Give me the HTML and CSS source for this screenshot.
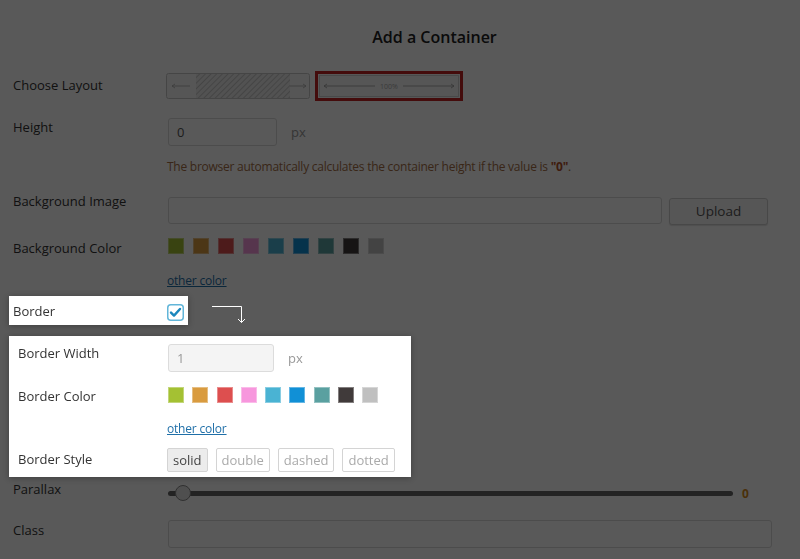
FILE: index.html
```html
<!DOCTYPE html>
<html>
<head>
<meta charset="utf-8">
<link rel="stylesheet" href="styles.css">
</head>
<body>
<div class="page">
  <h1 class="title">Add a Container</h1>

  <div class="row row-layout">
    <div class="label">Choose Layout</div>
    <div class="layouts">
      <svg class="layout-opt" width="144" height="26" viewBox="0 0 144 26">
        <defs>
          <pattern id="hatch" width="4" height="4" patternUnits="userSpaceOnUse" patternTransform="rotate(45)">
            <rect width="4" height="4" fill="#ebebeb"/>
            <line x1="0" y1="0" x2="0" y2="4" stroke="#bdbdbd" stroke-width="1.6"/>
          </pattern>
        </defs>
        <rect x="0.5" y="0.5" width="143" height="25" rx="2" fill="#f7f7f7" stroke="#c6c6c6"/>
        <rect x="30" y="1" width="94" height="24" fill="url(#hatch)"/>
        <path d="M6 13H24M6 13l3-2M6 13l3 2M124 13H140M140 13l-3-2M140 13l-3 2" stroke="#aaa" stroke-width="0.8" fill="none"/>
      </svg>
      <svg class="layout-opt sel" width="148" height="30" viewBox="0 0 148 30">
        <rect x="1.5" y="1.5" width="145" height="27" fill="#fafafa" stroke="#c42424" stroke-width="3"/>
        <rect x="4.5" y="4.5" width="139" height="21" fill="#f6f6f6" stroke="#d0d0d0"/>
        <path d="M9 15H60M88 15H139M9 15l3-2M9 15l3 2M139 15l-3-2M139 15l-3 2" stroke="#999" stroke-width="0.8" fill="none"/>
        <text x="74" y="17.5" text-anchor="middle" font-family="Open Sans, sans-serif" font-size="7" fill="#aaa">100%</text>
      </svg>
    </div>
  </div>

  <div class="row row-height">
    <div class="label">Height</div>
    <div class="input input-height">0</div>
    <span class="unit">px</span>
  </div>

  <p class="help">The browser automatically calculates the container height if the value is <b>"0"</b>.</p>

  <div class="row row-bgimg">
    <div class="label">Background Image</div>
    <div class="input input-bgimg"></div>
    <div class="btn-upload">Upload</div>
  </div>

  <div class="row row-bgcolor">
    <div class="label label-swatch">Background Color</div>
    <div class="swatches swatches-bg">
      <span class="sw c1"></span><span class="sw c2"></span><span class="sw c3"></span>
      <span class="sw c4"></span><span class="sw c5"></span><span class="sw c6"></span>
      <span class="sw c7"></span><span class="sw c8"></span><span class="sw c9"></span>
    </div>
  </div>

  <a class="other" href="#">other color</a>

  <div class="border-row">
    <div class="hl hl-border">
      <div class="label label-border">Border</div>
      <svg class="check" width="17" height="17" viewBox="0 0 17 17">
        <rect x="0.75" y="0.75" width="15.5" height="15.5" rx="3" fill="#fff" stroke="#62b6d9" stroke-width="1.5"/>
        <path d="M4 8.6l3 3 6-6.6" stroke="#1b87bd" stroke-width="2.4" fill="none" stroke-linecap="round" stroke-linejoin="round"/>
      </svg>
    </div>
    <svg class="hint-arrow" width="36" height="18" viewBox="0 0 36 18">
      <path d="M0 0.5H29.5V16.5M26 13l3.5 3.5 3.5-3.5" stroke="#fff" stroke-width="1" fill="none"/>
    </svg>
  </div>

  <div class="hl hl-options">
    <div class="row row-bw">
      <div class="label label-sub">Border Width</div>
      <div class="input input-bw">1</div>
      <span class="unit">px</span>
    </div>
    <div class="row row-bc">
      <div class="label label-sub">Border Color</div>
      <div class="swatches swatches-border">
        <span class="sw c1"></span><span class="sw c2"></span><span class="sw c3"></span>
        <span class="sw c4"></span><span class="sw c5"></span><span class="sw c6"></span>
        <span class="sw c7"></span><span class="sw c8"></span><span class="sw c9"></span>
      </div>
    </div>
    <a class="other other-sub" href="#">other color</a>
    <div class="row row-bs">
      <div class="label label-sub label-bs">Border Style</div>
      <div class="styles">
        <span class="sbtn on">solid</span>
        <span class="sbtn">double</span>
        <span class="sbtn">dashed</span>
        <span class="sbtn">dotted</span>
      </div>
    </div>
  </div>

  <div class="row row-parallax">
    <div class="label">Parallax</div>
    <div class="track"><span class="thumb"></span></div>
    <span class="pval">0</span>
  </div>

  <div class="row row-class">
    <div class="label label-class">Class</div>
    <div class="input input-class"></div>
  </div>
</div>
<div class="overlay"></div>
</body>
</html>
```

FILE: styles.css
```css
html, body {
  margin: 0;
  padding: 0;
}
body {
  font-family: "Open Sans", "Noto Sans", sans-serif;
  font-size: 13px;
  color: #333;
  background: #fff;
  width: 800px;
  height: 559px;
  overflow: hidden;
}
.page {
  padding: 27px 0 0 9px;
}
.title {
  margin: 0 0 24px;
  padding-left: 60px;
  font-size: 16px;
  font-weight: 600;
  line-height: 20px;
  text-align: center;
  color: #222;
}
.row {
  display: flex;
  align-items: flex-start;
  padding-left: 4px;
}
.label {
  width: 155px;
  flex: none;
  line-height: 18px;
}
.row-layout .label {
  padding-top: 5px;
}
.layouts {
  display: flex;
  align-items: flex-start;
  gap: 5px;
  margin-left: -2px;
}
.layout-opt {
  display: block;
  margin-top: 2px;
}
.layout-opt.sel {
  margin-top: 0;
}
.row-height {
  margin-top: 17px;
}
.input {
  box-sizing: border-box;
  height: 28px;
  border: 1px solid #d9d9d9;
  border-radius: 3px;
  background: #fff;
  padding-left: 8px;
  line-height: 26px;
  color: #555;
}
.input-height {
  width: 109px;
}
.unit {
  margin-left: 14px;
  line-height: 28px;
  color: #999;
}
.help {
  margin: 12px 0 0 158px;
  font-size: 12px;
  letter-spacing: -0.25px;
  line-height: 18px;
  color: #a56e45;
}
.help b {
  color: #b2502a;
}
.row-bgimg {
  margin-top: 16px;
}
.input-bgimg {
  width: 494px;
  height: 27px;
  margin-top: 5px;
}
.btn-upload {
  box-sizing: border-box;
  width: 99px;
  height: 27px;
  margin: 6px 0 0 7px;
  border: 1px solid #cfcfcf;
  border-radius: 3px;
  background: #f7f7f7;
  box-shadow: 0 1px 1px rgba(0, 0, 0, 0.12);
  text-align: center;
  line-height: 25px;
  font-size: 13.5px;
  color: #555;
}
.row-bgcolor {
  margin-top: 13px;
}
.label-swatch {
  padding-top: 1px;
}
.swatches {
  display: flex;
}
.swatches-bg {
  gap: 9px;
}
.swatches-border {
  gap: 8.25px;
}
.sw {
  display: block;
  width: 16px;
  height: 16px;
  box-sizing: border-box;
  border: 1px solid rgba(255, 255, 255, 0.35);
}
.c1 { background: #a4c133; }
.c2 { background: #d99b3f; }
.c3 { background: #dd4f4f; }
.c4 { background: #f797dd; }
.c5 { background: #4ab3d3; }
.c6 { background: #1190d6; }
.c7 { background: #5aa0a0; }
.c8 { background: #403a3a; }
.c9 { background: #c0c0c0; }
.other {
  display: block;
  width: max-content;
  margin: 15px 0 0 158px;
  line-height: 18px;
  font-size: 12px;
  letter-spacing: -0.2px;
  color: #1f6fa8;
  text-decoration: underline;
}
.border-row {
  display: flex;
  align-items: flex-start;
  margin-top: 6px;
}
.hl {
  position: relative;
  z-index: 2;
  background: #fff;
  box-shadow: 0 1px 6px rgba(0, 0, 0, 0.3);
}
.hl-border {
  display: flex;
  align-items: flex-start;
  box-sizing: border-box;
  width: 179px;
  height: 29px;
  padding-left: 4px;
}
.label-border {
  width: 154px;
  padding-top: 6px;
}
.check {
  display: block;
  margin-top: 8px;
}
.hint-arrow {
  position: relative;
  z-index: 2;
  display: block;
  margin: 10px 0 0 24px;
}
.hl-options {
  box-sizing: border-box;
  width: 402px;
  height: 141px;
  margin-top: 11px;
  padding: 8px 0 0 9px;
}
.hl-options .row {
  padding-left: 0;
}
.label-sub {
  width: 150px;
}
.input-bw {
  width: 106px;
  background: #f4f4f4;
  border-color: #dcdcdc;
  color: #999;
}
.row-bc {
  margin-top: 15px;
}
.other-sub {
  margin: 15px 0 0 149px;
}
.row-bs {
  margin-top: 10px;
}
.label-bs {
  padding-top: 2px;
}
.styles {
  display: flex;
  gap: 8px;
  margin-left: -1px;
}
.sbtn {
  display: block;
  box-sizing: border-box;
  height: 24px;
  padding: 0 5px;
  border: 1px solid #d4d4d4;
  border-radius: 2px;
  line-height: 22px;
  color: #aaa;
  background: #fff;
}
.sbtn.on {
  background: #ececec;
  color: #444;
}
.row-parallax {
  margin-top: 3px;
  height: 18px;
}
.track {
  position: relative;
  width: 565px;
  height: 5px;
  margin-top: 11px;
  border-radius: 3px;
  background: #646464;
}
.thumb {
  position: absolute;
  left: 7px;
  top: -6px;
  width: 16px;
  height: 16px;
  box-sizing: border-box;
  border: 1px solid #8a8a8a;
  border-radius: 50%;
  background: #e2e2e2;
}
.pval {
  margin: 5px 0 0 9px;
  line-height: 18px;
  font-weight: 700;
  font-size: 12px;
  color: #d58a1a;
}
.row-class {
  margin-top: 22px;
}
.label-class {
  padding-top: 1px;
}
.input-class {
  width: 604px;
}
.overlay {
  position: fixed;
  inset: 0;
  z-index: 1;
  background: rgba(0, 0, 0, 0.65);
}
```
